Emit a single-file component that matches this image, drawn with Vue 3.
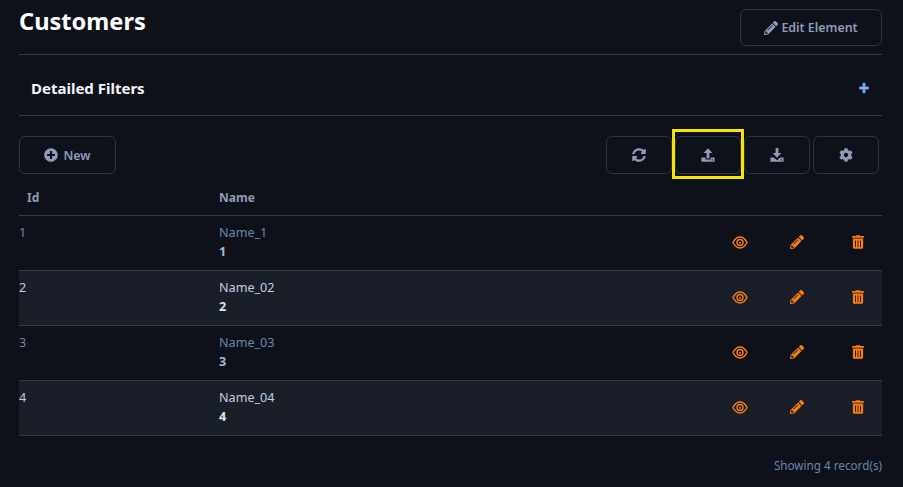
<script setup>
const icons = {
  pencil: { vb: '0 0 512 512', d: 'M497.9 142.1l-46.1 46.1c-4.7 4.7-12.3 4.7-17 0l-111-111c-4.7-4.7-4.7-12.3 0-17l46.1-46.1c18.7-18.7 49.1-18.7 67.9 0l60.1 60.1c18.8 18.7 18.8 49.1 0 67.9zM284.2 99.8L21.6 362.4.4 483.9c-2.9 16.4 11.4 30.6 27.8 27.8l121.5-21.3 262.6-262.6c4.7-4.7 4.7-12.3 0-17l-111-111c-4.8-4.7-12.4-4.7-17.1 0zM124.1 339.9c-5.5-5.5-5.5-14.3 0-19.8l154-154c5.5-5.5 14.3-5.5 19.8 0s5.5 14.3 0 19.8l-154 154c-5.5 5.5-14.3 5.5-19.8 0zM88 424h48v36.3l-64.5 11.3-31.1-31.1L51.7 376H88v48z' },
  plus: { vb: '0 0 448 512', d: 'M416 208H272V64c0-17.67-14.33-32-32-32h-32c-17.67 0-32 14.33-32 32v144H32c-17.67 0-32 14.33-32 32v32c0 17.67 14.33 32 32 32h144v144c0 17.67 14.33 32 32 32h32c17.67 0 32-14.33 32-32V304h144c17.67 0 32-14.33 32-32v-32c0-17.67-14.33-32-32-32z' },
  plusCircle: { vb: '0 0 512 512', d: 'M256 8C119 8 8 119 8 256s111 248 248 248 248-111 248-248S393 8 256 8zm144 276c0 6.6-5.4 12-12 12h-92v92c0 6.6-5.4 12-12 12h-56c-6.6 0-12-5.4-12-12v-92h-92c-6.6 0-12-5.4-12-12v-56c0-6.6 5.4-12 12-12h92v-92c0-6.6 5.4-12 12-12h56c6.6 0 12 5.4 12 12v92h92c6.6 0 12 5.4 12 12v56z' },
  sync: { vb: '0 0 512 512', d: 'M370.72 133.28C339.458 104.008 298.888 87.962 255.848 88c-77.458.068-144.328 53.178-162.791 126.85-1.344 5.363-6.122 9.15-11.651 9.15H24.103c-7.498 0-13.194-6.807-11.807-14.176C33.933 94.924 134.813 8 256 8c66.448 0 126.791 26.136 171.315 68.685L463.03 40.97C478.149 25.851 504 36.559 504 57.941V192c0 13.255-10.745 24-24 24H345.941c-21.382 0-32.09-25.851-16.971-40.971l41.75-41.749zM32 296h134.059c21.382 0 32.09 25.851 16.971 40.971l-41.75 41.75c31.262 29.273 71.835 45.319 114.876 45.28 77.418-.07 144.315-53.144 162.787-126.849 1.344-5.363 6.122-9.15 11.651-9.15h57.304c7.498 0 13.194 6.807 11.807 14.176C478.067 417.076 377.187 504 256 504c-66.448 0-126.791-26.136-171.315-68.685L48.97 471.03C33.851 486.149 8 475.441 8 454.059V320c0-13.255 10.745-24 24-24z' },
  upload: { vb: '0 0 14 14', d: 'M7 0.2L11.4 5H8.4V10.2H5.6V5H2.6ZM0.4 9.4H4.4V11.4H9.6V9.4H13.6V13.8H0.4ZM11.2 11.2a.7 .7 0 1 0 .01 0Z' },
  download: { vb: '0 0 14 14', d: 'M5.6 0H8.4V5H11.3L7 9.8 2.7 5H5.6ZM0.4 9.4H3.6L7 12.2 10.4 9.4H13.6V13.8H0.4ZM11.2 11.2a.7 .7 0 1 0 .01 0Z' },
  cog: { vb: '0 0 512 512', d: 'M487.4 315.7l-42.6-24.6c4.3-23.2 4.3-47 0-70.2l42.6-24.6c4.9-2.8 7.1-8.6 5.5-14-11.1-35.6-30-67.8-54.7-94.6-3.8-4.1-10-5.1-14.8-2.3L380.8 110c-17.9-15.4-38.5-27.3-60.8-35.1V25.8c0-5.6-3.9-10.5-9.4-11.7-36.7-8.2-74.3-7.8-109.2 0-5.5 1.2-9.4 6.1-9.4 11.7V75c-22.2 7.9-42.8 19.8-60.8 35.1L88.7 85.5c-4.9-2.8-11-1.9-14.8 2.3-24.7 26.7-43.6 58.9-54.7 94.6-1.7 5.4.6 11.2 5.5 14L67.3 221c-4.3 23.2-4.3 47 0 70.2l-42.6 24.6c-4.9 2.8-7.1 8.6-5.5 14 11.1 35.6 30 67.8 54.7 94.6 3.8 4.1 10 5.1 14.8 2.3l42.6-24.6c17.9 15.4 38.5 27.3 60.8 35.1v49.2c0 5.6 3.9 10.5 9.4 11.7 36.7 8.2 74.3 7.8 109.2 0 5.5-1.2 9.4-6.1 9.4-11.7v-49.2c22.2-7.9 42.8-19.8 60.8-35.1l42.6 24.6c4.9 2.8 11 1.9 14.8-2.3 24.7-26.7 43.6-58.9 54.7-94.6 1.5-5.5-.7-11.3-5.6-14.1zM256 336c-44.1 0-80-35.9-80-80s35.9-80 80-80 80 35.9 80 80-35.9 80-80 80z' },
  trash: { vb: '0 0 448 512', d: 'M32 464a48 48 0 0 0 48 48h288a48 48 0 0 0 48-48V128H32zm272-256a16 16 0 0 1 32 0v224a16 16 0 0 1-32 0zm-96 0a16 16 0 0 1 32 0v224a16 16 0 0 1-32 0zm-96 0a16 16 0 0 1 32 0v224a16 16 0 0 1-32 0zM432 32H312l-9.4-18.7A24 24 0 0 0 281.1 0H166.8a23.72 23.72 0 0 0-21.4 13.3L136 32H16A16 16 0 0 0 0 48v32a16 16 0 0 0 16 16h416a16 16 0 0 0 16-16V48a16 16 0 0 0-16-16z' }
}

const tools = [
  { key: 'sync', cls: 'tool-sync' },
  { key: 'upload', cls: 'tool-upload' },
  { key: 'download', cls: 'tool-download' },
  { key: 'cog', cls: 'tool-cog' }
]

const rows = [
  { id: 1, name: 'Name_1' },
  { id: 2, name: 'Name_02' },
  { id: 3, name: 'Name_03' },
  { id: 4, name: 'Name_04' }
]
</script>

<template>
  <div class="page">
    <header class="title-row">
      <h1>Customers</h1>
      <button class="btn edit">
        <svg class="ico i14" :viewBox="icons.pencil.vb"><path :d="icons.pencil.d" /></svg>
        Edit Element
      </button>
    </header>

    <section class="filters">
      <h2>Detailed Filters</h2>
      <svg class="plus" :viewBox="icons.plus.vb"><path :d="icons.plus.d" /></svg>
    </section>

    <div class="toolbar">
      <button class="btn new">
        <svg class="ico i14" :viewBox="icons.plusCircle.vb"><path :d="icons.plusCircle.d" /></svg>
        New
      </button>
      <div class="tools">
        <button v-for="t in tools" :key="t.key" class="btn tool" :class="t.cls">
          <svg class="ico i14" :viewBox="icons[t.key].vb"><path fill-rule="evenodd" :d="icons[t.key].d" /></svg>
        </button>
        <div class="highlight"></div>
      </div>
    </div>

    <div class="table">
      <div class="thead">
        <span class="th-id">Id</span>
        <span>Name</span>
      </div>
      <div v-for="r in rows" :key="r.id" class="row" :class="{ even: r.id % 2 === 0 }">
        <span class="cell-id">{{ r.id }}</span>
        <div class="cell-name">
          <span>{{ r.name }}</span>
          <strong>{{ r.id }}</strong>
        </div>
        <div class="actions">
          <svg class="act a-eye" viewBox="0 0 16 13">
            <path class="eye-line" d="M.9 6.5C2.8 3 5.3 1 8 1s5.2 2 7.1 5.5C13.2 10 10.7 12 8 12S2.8 10 .9 6.5Z" />
            <circle class="eye-line" cx="8" cy="6.5" r="3" />
            <circle class="eye-dot" cx="8" cy="6.8" r="1" />
          </svg>
          <svg class="act a-pencil" :viewBox="icons.pencil.vb"><path :d="icons.pencil.d" /></svg>
          <svg class="act a-trash" :viewBox="icons.trash.vb"><path :d="icons.trash.d" /></svg>
        </div>
      </div>
    </div>

    <footer class="foot">Showing 4 record(s)</footer>
  </div>
</template>

<style>
html, body { margin: 0; background: #0e111a; }
</style>

<style scoped>
.page {
  box-sizing: border-box;
  width: 903px;
  height: 487px;
  padding: 0 21px 0 19px;
  overflow: hidden;
  background: #0e111a;
  font-family: "Noto Sans", "Open Sans", sans-serif;
  font-size: 12.6px;
  color: #8f9bb8;
}
.title-row {
  height: 54px;
  border-bottom: 1px solid #363a4e;
  display: flex;
  justify-content: space-between;
  align-items: flex-start;
}
h1 {
  margin: 6px 0 0;
  font-size: 23.6px;
  line-height: 30px;
  font-weight: 700;
  color: #fff;
}
.btn {
  box-sizing: border-box;
  display: flex;
  align-items: center;
  justify-content: center;
  gap: 3px;
  background: transparent;
  border: 1px solid #2f3344;
  border-radius: 6px;
  color: #8f9bb8;
  font: 600 12.4px "Noto Sans", "Open Sans", sans-serif;
  padding: 0;
}
.edit { width: 142px; height: 37px; margin-top: 9px; }
.ico { fill: currentColor; display: block; }
.i14 { width: 14px; height: 14px; }
.filters {
  box-sizing: border-box;
  height: 61px;
  padding: 5px 13px 0 12px;
  border-bottom: 1px solid #363a4e;
  display: flex;
  align-items: center;
  justify-content: space-between;
}
h2 {
  margin: 0;
  font-size: 15px;
  font-weight: 700;
  color: #f2f4f8;
}
.plus { width: 10px; height: 12px; fill: #86a5ee; stroke: #86a5ee; stroke-width: 30; }
.toolbar {
  margin-top: 20px;
  display: flex;
  justify-content: space-between;
  padding-right: 3px;
}
.new { width: 97px; height: 38px; gap: 5px; }
.tools { display: flex; position: relative; gap: 3px; }
.tool { width: 66px; height: 38px; }
.highlight {
  position: absolute;
  left: 66px;
  top: -7px;
  width: 72px;
  height: 50px;
  box-sizing: border-box;
  border: 3px solid #f5e600;
  pointer-events: none;
}
.table { margin-top: 6px; }
.thead {
  height: 35px;
  border-bottom: 1px solid #363a4e;
  display: grid;
  grid-template-columns: 200px 1fr;
  align-items: center;
  font-size: 12px;
  font-weight: 700;
  color: #8f9bb8;
}
.th-id { padding-left: 8px; }
.row {
  height: 54px;
  border-bottom: 1px solid #363a4e;
  display: grid;
  grid-template-columns: 200px 1fr auto;
  color: #6b86ad;
  font-size: 12.6px;
}
.row.even { background: #1a1e29; color: #c4cfe2; }
.cell-id { padding-top: 8px; line-height: 18px; }
.cell-name { display: flex; flex-direction: column; padding-top: 7px; line-height: 19px; }
.cell-name strong { font-weight: 700; color: #a9b8d0; }
.row.even .cell-name strong { color: #dfe6f2; }
.actions {
  display: flex;
  align-items: center;
  gap: 42px;
  padding: 0 18px 2px 0;
}
.act { display: block; fill: #f97b16; }
.eye-line { fill: none; stroke: #f97b16; stroke-width: 1.4; }
.eye-dot { fill: #f97b16; }
.a-eye { width: 16px; height: 13px; }
.a-pencil { width: 14px; height: 14px; }
.a-trash { width: 12px; height: 14px; margin-left: 6px; }
.foot {
  margin-top: 21px;
  text-align: right;
  font-size: 11.7px;
  color: #6b86ad;
}
</style>
